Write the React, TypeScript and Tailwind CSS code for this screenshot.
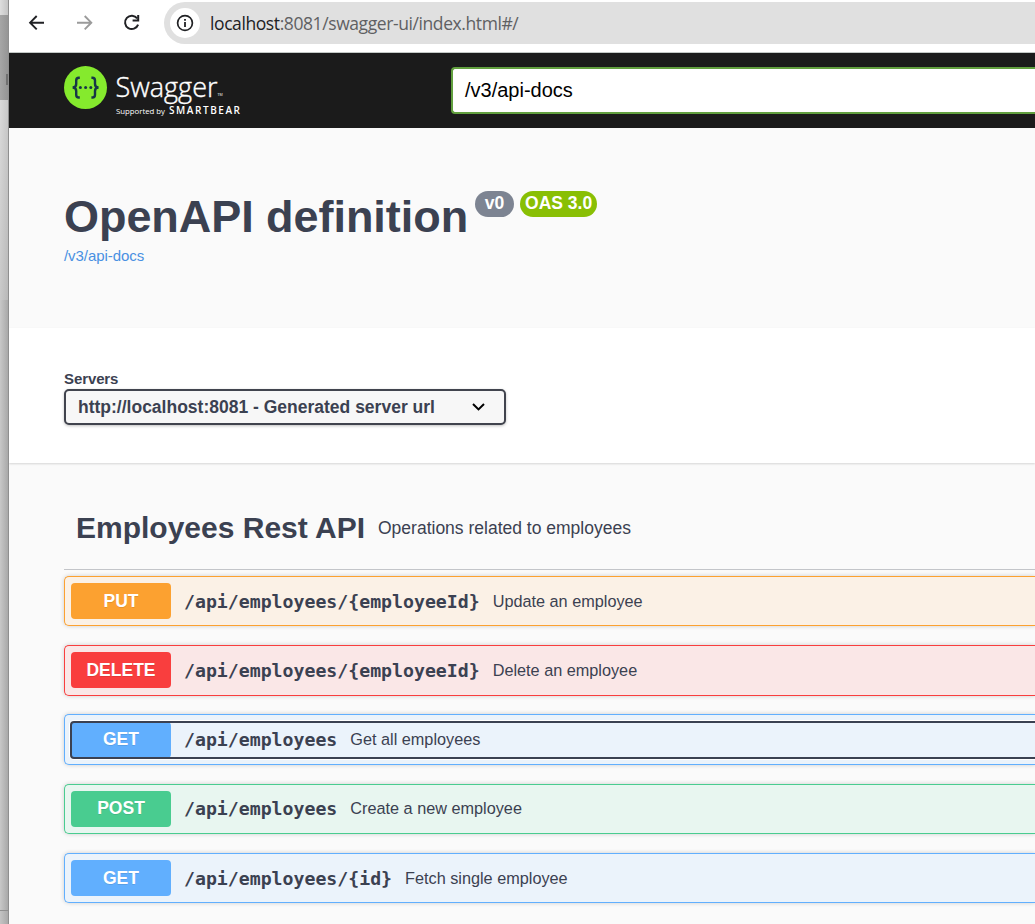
import React from "react";

type Op = {
  method: string;
  path: string;
  summary: string;
  row: string;
  button: string;
  text: string;
  focused?: boolean;
};

const operations: Op[] = [
  { method: "PUT", path: "/api/employees/{employeeId}", summary: "Update an employee", row: "h-[50px] pt-[6px] mb-[19px] border-[#fca130] bg-[#fbf1e6]", button: "bg-[#fca130]", text: "" },
  { method: "DELETE", path: "/api/employees/{employeeId}", summary: "Delete an employee", row: "h-[51px] pt-[6px] mb-[18px] border-[#f93e3e] bg-[#fae7e7]", button: "bg-[#f93e3e]", text: "" },
  { method: "GET", path: "/api/employees", summary: "Get all employees", row: "h-[51px] pt-[7px] mb-[19px] border-[#61affe] bg-[#ebf3fb]", button: "bg-[#61affe]", text: "pb-[2px]", focused: true },
  { method: "POST", path: "/api/employees", summary: "Create a new employee", row: "h-[50px] pt-[6px] mb-[19px] border-[#49cc90] bg-[#e8f6f0]", button: "bg-[#49cc90]", text: "pb-[2px]" },
  { method: "GET", path: "/api/employees/{id}", summary: "Fetch single employee", row: "h-[50px] pt-[6px] border-[#61affe] bg-[#ebf3fb]", button: "bg-[#61affe]", text: "" },
];

function BrowserBar() {
  return (
    <div className="flex h-[53px] shrink-0 items-start border-b border-[#c3c9c6] bg-white">
      <svg className="ml-[19px] mt-[14px] shrink-0" width="18" height="18" viewBox="0 0 18 18" fill="none" stroke="#202124" strokeWidth="1.9">
        <path d="M16 8.7H2.4M8.7 2L2.1 8.7L8.7 15.4" />
      </svg>
      <svg className="ml-[30px] mt-[14px] shrink-0" width="18" height="18" viewBox="0 0 18 18" fill="none" stroke="#9b9b9b" strokeWidth="1.9">
        <path d="M1 8.7H15M8.7 2L15.3 8.7L8.7 15.4" />
      </svg>
      <svg className="ml-[28px] mt-[13px] shrink-0" width="19" height="19" viewBox="0 0 19 19" fill="none" stroke="#202124" strokeWidth="2">
        <path d="M15.2 5.4A6.7 6.7 0 1 0 16.1 11.6" />
        <path d="M16.2 2V7.6H10.6" />
      </svg>
      <div className="ml-[23px] mt-[2px] flex h-[42px] flex-1 items-center rounded-l-full bg-[#e0e0e0] pl-[6px]">
        <div className="flex size-[30px] shrink-0 items-center justify-center rounded-full bg-white">
          <svg width="18" height="18" viewBox="0 0 18 18" fill="none" stroke="#202124">
            <circle cx="9" cy="9" r="7.4" strokeWidth="1.7" />
            <path d="M9 8V13M9 5V6.7" strokeWidth="1.8" />
          </svg>
        </div>
        <span className="ml-[10px] whitespace-nowrap font-['Open_Sans',sans-serif] text-[17.5px] tracking-[-0.41px] text-[#5f6063]">
          <span className="text-[#202124]">localhost</span>:8081/swagger-ui/index.html#/
        </span>
      </div>
    </div>
  );
}

function Logo() {
  return (
    <svg width="180" height="56" viewBox="0 0 180 56" className="shrink-0">
      <circle cx="21.5" cy="21.6" r="21.5" fill="#85ea2d" />
      <g transform="translate(0 -3.1)">
        <g fill="none" stroke="#173647" strokeWidth="2.4">
          <path d="M15.8 14.8H14.8Q12.2 14.8 12.2 17.5V21Q12.2 24.6 8.6 24.6Q12.2 24.6 12.2 28.2V31.8Q12.2 34.6 14.8 34.6H15.8" />
          <path d="M27.4 14.8H28.4Q31 14.8 31 17.5V21Q31 24.6 34.6 24.6Q31 24.6 31 28.2V31.8Q31 34.6 28.4 34.6H27.4" />
        </g>
        <g fill="#173647">
          <circle cx="16.4" cy="24.7" r="1.5" />
          <circle cx="21.6" cy="24.7" r="1.5" />
          <circle cx="26.8" cy="24.7" r="1.5" />
        </g>
      </g>
      <g fill="#fff" fontFamily="Open Sans, sans-serif">
        <text x="51.5" y="30.5" fontSize="27.5" fontWeight="300" stroke="#fff" strokeWidth="0.4" textLength="102" lengthAdjust="spacingAndGlyphs">Swagger</text>
        <text x="153.5" y="30.2" fontSize="3.5">TM</text>
        <text x="52" y="48" fontSize="7.6" textLength="49" lengthAdjust="spacingAndGlyphs">Supported by</text>
        <text x="105" y="48" fontSize="10" fontWeight="600" textLength="71">SMARTBEAR</text>
      </g>
    </svg>
  );
}

function Operation({ op }: { op: Op }) {
  return (
    <div className={`flex shrink-0 items-start rounded-l-[5px] border border-r-0 pl-[6px] shadow-[0_0_4px_rgba(0,0,0,0.19)] ${op.row}`}>
      <div className={`-mr-2 flex h-9 flex-1 items-center rounded-[3px] ${op.focused ? "shadow-[0_0_0_2px_#fff] outline-2 -outline-offset-1 outline-[#3b4151]" : ""}`}>
        <div className={`flex h-9 w-[100px] shrink-0 items-center justify-center rounded-[4px] text-[17.5px] font-bold text-white [text-shadow:0_1px_0_rgba(0,0,0,0.1)] ${op.button} ${op.text}`}>
          {op.method}
        </div>
        <span className={`ml-[13px] whitespace-nowrap font-['DejaVu_Sans_Mono',monospace] text-[18.2px] font-bold ${op.text}`}>
          <span className="block pt-[2px]">{op.path}</span>
        </span>
        <span className={`ml-[13px] whitespace-nowrap text-[16.25px] ${op.text}`}>{op.summary}</span>
      </div>
    </div>
  );
}

export default function App() {
  return (
    <div className="flex h-[924px] w-[1035px] overflow-hidden bg-[#fafafa] font-['Liberation_Sans',Arial,sans-serif] text-[#3b4151]">
      <div className="flex w-[9px] shrink-0 flex-col border-r border-[#8f8f8f]">
        <div className="h-[15px] bg-linear-to-r from-[#dedede] to-[#c4c4c4]" />
        <div className="flex h-[85px] items-start justify-end bg-linear-to-r from-[#a6a6a6] to-[#959595] pt-[59px]">
          <div className="h-[11px] w-[2px] bg-[#707070]" />
        </div>
        <div className="h-[200px] bg-linear-to-br from-[#dadada] to-[#b8b8b8]" />
        <div className="h-[610px] bg-linear-to-r from-[#c8c8c8] to-[#a9a9a9]" />
        <div className="h-px bg-[#8f8f8f]" />
        <div className="flex-1 bg-linear-to-r from-[#c4c4c4] to-[#a9a9a9]" />
      </div>
      <div className="flex min-w-0 flex-1 flex-col overflow-hidden">
        <BrowserBar />
        <header className="flex h-[75px] shrink-0 items-start bg-[#1b1b1b] pl-[55px] pt-[13px]">
          <Logo />
          <div className="ml-[207px] mt-px flex h-[47px] flex-1 items-center rounded-l-[4px] border-2 border-r-0 border-[#62a03f] bg-white pb-[2px] pl-3 text-[20px] text-black">
            /v3/api-docs
          </div>
        </header>
        <section className="h-[200px] shrink-0 pl-[55px] pt-[63px]">
          <div className="flex items-start">
            <h1 className="whitespace-nowrap text-[45px] font-bold leading-[52px] tracking-[-0.05px]">OpenAPI definition</h1>
            <span className="ml-[7px] flex h-[26px] w-[39px] items-center justify-center rounded-full bg-[#7d8492] pb-[2px] text-[17.5px] font-bold text-white">v0</span>
            <span className="ml-[6px] flex h-[26px] w-[77px] items-center justify-center rounded-full bg-[#89bf04] pb-[2px] text-[17.5px] font-bold text-white">OAS 3.0</span>
          </div>
          <a className="mt-[3px] block text-[15px] leading-[20px] tracking-[-0.05px] text-[#4990e2]">/v3/api-docs</a>
        </section>
        <section className="h-[135px] shrink-0 bg-white pl-[55px] pt-[41px] shadow-[0_1px_2px_rgba(0,0,0,0.15)]">
          <div className="mb-px text-[15px] font-bold leading-[19px] tracking-[-0.1px]">Servers</div>
          <div className="flex h-9 w-[442px] items-center justify-between rounded-[5px] border-2 border-[#41444e] bg-[#f7f7f7] pl-3 pr-[19px] text-[17.5px] font-bold shadow-[0_1px_3px_rgba(0,0,0,0.25)]">
            <span className="whitespace-nowrap">http://localhost:8081 - Generated server url</span>
            <svg width="13" height="8" viewBox="0 0 13 8" fill="none" stroke="#000" strokeWidth="2">
              <path d="M1 1L6.5 6.4L12 1" />
            </svg>
          </div>
        </section>
        <main className="flex flex-1 flex-col pl-[55px]">
          <div className="mb-[6px] flex h-[107px] shrink-0 items-center border-b border-[#c3c5c9] pl-[12px] pt-[22px]">
            <h2 className="whitespace-nowrap text-[30px] font-bold">Employees Rest API</h2>
            <span className="ml-[13px] whitespace-nowrap pt-[2px] text-[17.5px]">Operations related to employees</span>
          </div>
          {operations.map((op, i) => (
            <Operation key={i} op={op} />
          ))}
        </main>
      </div>
    </div>
  );
}
